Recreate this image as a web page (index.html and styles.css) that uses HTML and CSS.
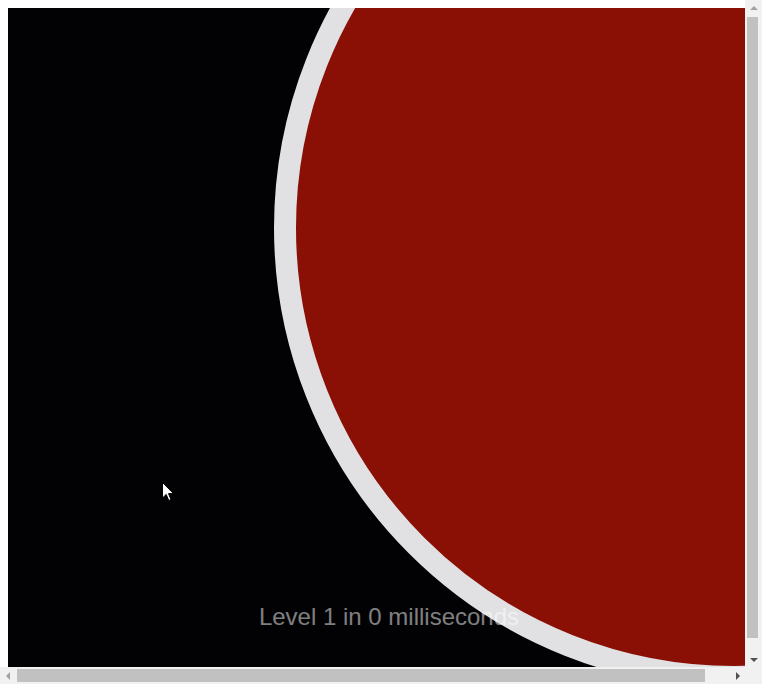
FILE: index.html
```html
<!DOCTYPE HTML>
<html>

	<head>
		<meta http-equiv="Content-Type" content="text/html; charset=utf-8">
		<link rel="stylesheet" href="styles.css">
	</head>

	<body>
		<div class="stage">
			<div class="ball"></div>
			<p class="status">Level 1 in 0 milliseconds</p>
			<svg class="pointer" width="13" height="20" viewBox="0 0 13 20">
				<path d="M0.5 0.5 L0.5 16 L4.2 12.4 L6.8 18.5 L9 17.6 L6.5 11.6 L11.5 11.6 Z" fill="#fff" stroke="#000" stroke-width="1"/>
			</svg>
		</div>

		<!-- window scrollbars -->
		<div class="vbar">
			<div class="btn"><span class="arrow up"></span></div>
			<div class="track"><div class="thumb"></div></div>
			<div class="btn"><span class="arrow down"></span></div>
		</div>
		<div class="hbar">
			<div class="btn"><span class="arrow left"></span></div>
			<div class="track"><div class="thumb"></div></div>
			<div class="btn"><span class="arrow right"></span></div>
		</div>
		<div class="corner"></div>
	</body>

</html>
```

FILE: styles.css
```css
html {
	background: #fff;
}

body {
	margin: 8px;
}

.stage {
	width: 762px;
	height: 670px;
	background: #020204;
	overflow: hidden;
	position: relative;
	display: flex;
	flex-direction: column;
	justify-content: flex-end;
}

/* the target circle */
.ball {
	position: absolute;
	left: 266px;
	top: -240px;
	width: 920px;
	height: 920px;
	box-sizing: border-box;
	border: 22px solid #e1e1e3;
	border-radius: 50%;
	background: #8a0f04;
}

.status {
	position: relative;
	margin: 0;
	padding-bottom: 49px;
	font-family: "Liberation Sans", Arial, sans-serif;
	font-size: 24px;
	line-height: 24px;
	text-align: center;
	color: rgba(255, 255, 255, 0.5);
}

.pointer {
	position: absolute;
	left: 154px;
	top: 474px;
}

/* scrollbars */
.vbar {
	position: fixed;
	top: 0;
	right: 0;
	width: 17px;
	height: 667px;
	background: #f1f1f1;
	display: flex;
	flex-direction: column;
}

.vbar .btn {
	height: 15px;
	display: flex;
	align-items: center;
	justify-content: center;
	padding-left: 1px;
}

.vbar .track {
	flex: 1;
	padding: 2px 4px 0 2px;
}

.vbar .thumb {
	height: 621px;
	background: #c1c1c1;
}

.hbar {
	position: fixed;
	left: 0;
	bottom: 0;
	width: 745px;
	height: 17px;
	background: #f1f1f1;
	display: flex;
}

.hbar .btn {
	width: 15px;
	display: flex;
	align-items: center;
	justify-content: center;
}

.hbar .track {
	flex: 1;
	padding: 2px 0 2px 2px;
}

.hbar .thumb {
	width: 688px;
	height: 13px;
	background: #c1c1c1;
}

.corner {
	position: fixed;
	right: 0;
	bottom: 0;
	width: 17px;
	height: 17px;
	background: #f1f1f1;
}

.arrow {
	width: 0;
	height: 0;
	border: 4px solid transparent;
}

.arrow.up {
	border-top-width: 0;
	border-bottom-color: #a3a3a3;
}

.arrow.down {
	border-bottom-width: 0;
	border-top-color: #505050;
}

.arrow.left {
	border-left-width: 0;
	border-right-color: #a3a3a3;
}

.arrow.right {
	border-right-width: 0;
	border-left-color: #505050;
}
```
